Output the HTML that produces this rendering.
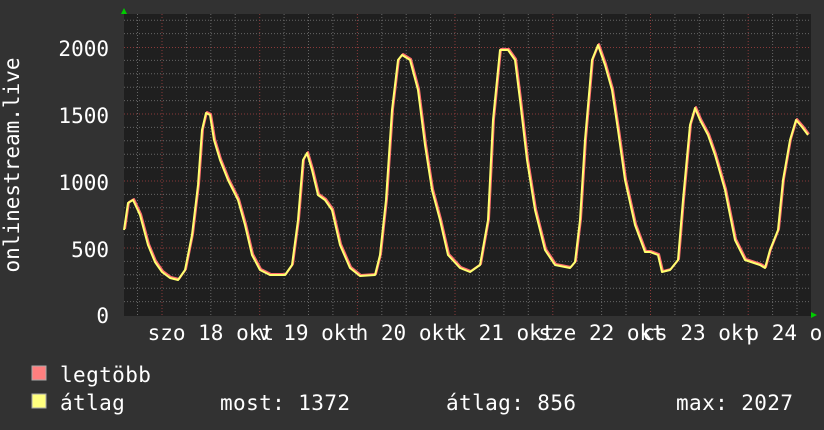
<!DOCTYPE html>
<html><head><meta charset="utf-8"><style>
html,body{margin:0;padding:0;background:#333;width:824px;height:430px;overflow:hidden}
svg{display:block}
text{font-family:"DejaVu Sans Mono","Liberation Mono",monospace;font-size:21px;fill:#fff}
.lg{letter-spacing:0.4px}
</style></head><body>
<svg width="824" height="430" viewBox="0 0 824 430" xmlns="http://www.w3.org/2000/svg">
<rect x="0" y="0" width="824" height="430" fill="#323232"/>
<rect x="124" y="14" width="687" height="302" fill="#1f1f1f"/>
<g stroke="#666" stroke-width="1" stroke-dasharray="1,2" fill="none">
<path d="M124 301.6H811M124 288.2H811M124 274.8H811M124 261.4H811M124 234.6H811M124 221.2H811M124 207.8H811M124 194.4H811M124 167.6H811M124 154.2H811M124 140.8H811M124 127.4H811M124 100.6H811M124 87.2H811M124 73.8H811M124 60.4H811M124 33.6H811M124 20.2H811"/>
<path d="M137.5 14V316M186.4 14V316M210.8 14V316M235.2 14V316M284.1 14V316M308.5 14V316M332.9 14V316M381.8 14V316M406.2 14V316M430.6 14V316M479.4 14V316M503.9 14V316M528.3 14V316M577.2 14V316M601.6 14V316M626 14V316M674.9 14V316M699.3 14V316M723.7 14V316M772.6 14V316M797 14V316"/>
</g>
<g stroke="#8a3a3a" stroke-width="1" stroke-dasharray="1,2" fill="none">
<path d="M124 248H811M124 181H811M124 114H811M124 47.5H811"/>
<path d="M162 14V316M259.7 14V316M357.4 14V316M455 14V316M552.8 14V316M650.5 14V316M748.2 14V316"/>
</g>
<polygon points="121,14 127,14 124,8" fill="#0c0"/>
<polygon points="811,312 811,318 817,315" fill="#0c0"/>
<g fill="none" stroke-linejoin="round">
<polyline stroke="#ff6f6f" stroke-width="2" transform="translate(1,-1)" points="124,230 128,203 133,200 140,215 148,245 155,262 162,272 170,278 178,280 185,270 192,235 198,185 202,130 206,113 210,115 214,140 220,160 228,180 238,200 245,225 252,255 260,270 270,275 285,275 292,265 298,220 303,160 307,153 312,170 318,195 325,200 332,210 340,245 350,268 360,276 375,275 380,255 386,200 392,110 398,60 402,55 410,60 418,90 425,145 432,190 440,220 448,255 460,268 470,272 480,265 488,220 493,120 500,50 508,50 515,60 520,100 527,160 535,210 545,250 555,265 570,268 575,262 580,220 585,140 592,60 598,45 605,65 612,90 618,130 625,180 635,225 645,252 650,252 658,255 662,272 670,270 678,260 683,200 690,125 695,108 700,120 708,135 715,155 725,190 735,240 745,260 760,265 765,268 770,250 778,230 783,180 790,140 796,120 802,127 808,135"/>
<polyline stroke="#ffff70" stroke-width="2" points="124,230 128,203 133,200 140,215 148,245 155,262 162,272 170,278 178,280 185,270 192,235 198,185 202,130 206,113 210,115 214,140 220,160 228,180 238,200 245,225 252,255 260,270 270,275 285,275 292,265 298,220 303,160 307,153 312,170 318,195 325,200 332,210 340,245 350,268 360,276 375,275 380,255 386,200 392,110 398,60 402,55 410,60 418,90 425,145 432,190 440,220 448,255 460,268 470,272 480,265 488,220 493,120 500,50 508,50 515,60 520,100 527,160 535,210 545,250 555,265 570,268 575,262 580,220 585,140 592,60 598,45 605,65 612,90 618,130 625,180 635,225 645,252 650,252 658,255 662,272 670,270 678,260 683,200 690,125 695,108 700,120 708,135 715,155 725,190 735,240 745,260 760,265 765,268 770,250 778,230 783,180 790,140 796,120 802,127 808,135"/>
</g>
<g text-anchor="end">
<text x="109" y="56">2000</text>
<text x="109" y="123">1500</text>
<text x="109" y="190">1000</text>
<text x="109" y="257">500</text>
<text x="109" y="323">0</text>
</g>
<text transform="translate(19,165) rotate(-90)" text-anchor="middle">onlinestream.live</text>
<g text-anchor="middle">
<text x="210.8" y="340">szo 18 okt</text>
<text x="308.5" y="340">v 19 okt</text>
<text x="406.2" y="340">h 20 okt</text>
<text x="503.9" y="340">k 21 okt</text>
<text x="601.6" y="340">sze 22 okt</text>
<text x="699.3" y="340">cs 23 okt</text>
<text x="797" y="340">p 24 okt</text>
</g>
<rect x="32" y="366" width="14" height="14" fill="#ff7f7f" stroke="#aaa" stroke-width="1"/>
<rect x="32" y="394" width="14" height="14" fill="#ffff7f" stroke="#aaa" stroke-width="1"/>
<text class="lg" x="60" y="382">legtöbb</text>
<text class="lg" x="60" y="410">átlag</text>
<text class="lg" x="220" y="410">most: 1372</text>
<text class="lg" x="446" y="410">átlag: 856</text>
<text class="lg" x="676" y="410">max: 2027</text>
</svg>
</body></html>
